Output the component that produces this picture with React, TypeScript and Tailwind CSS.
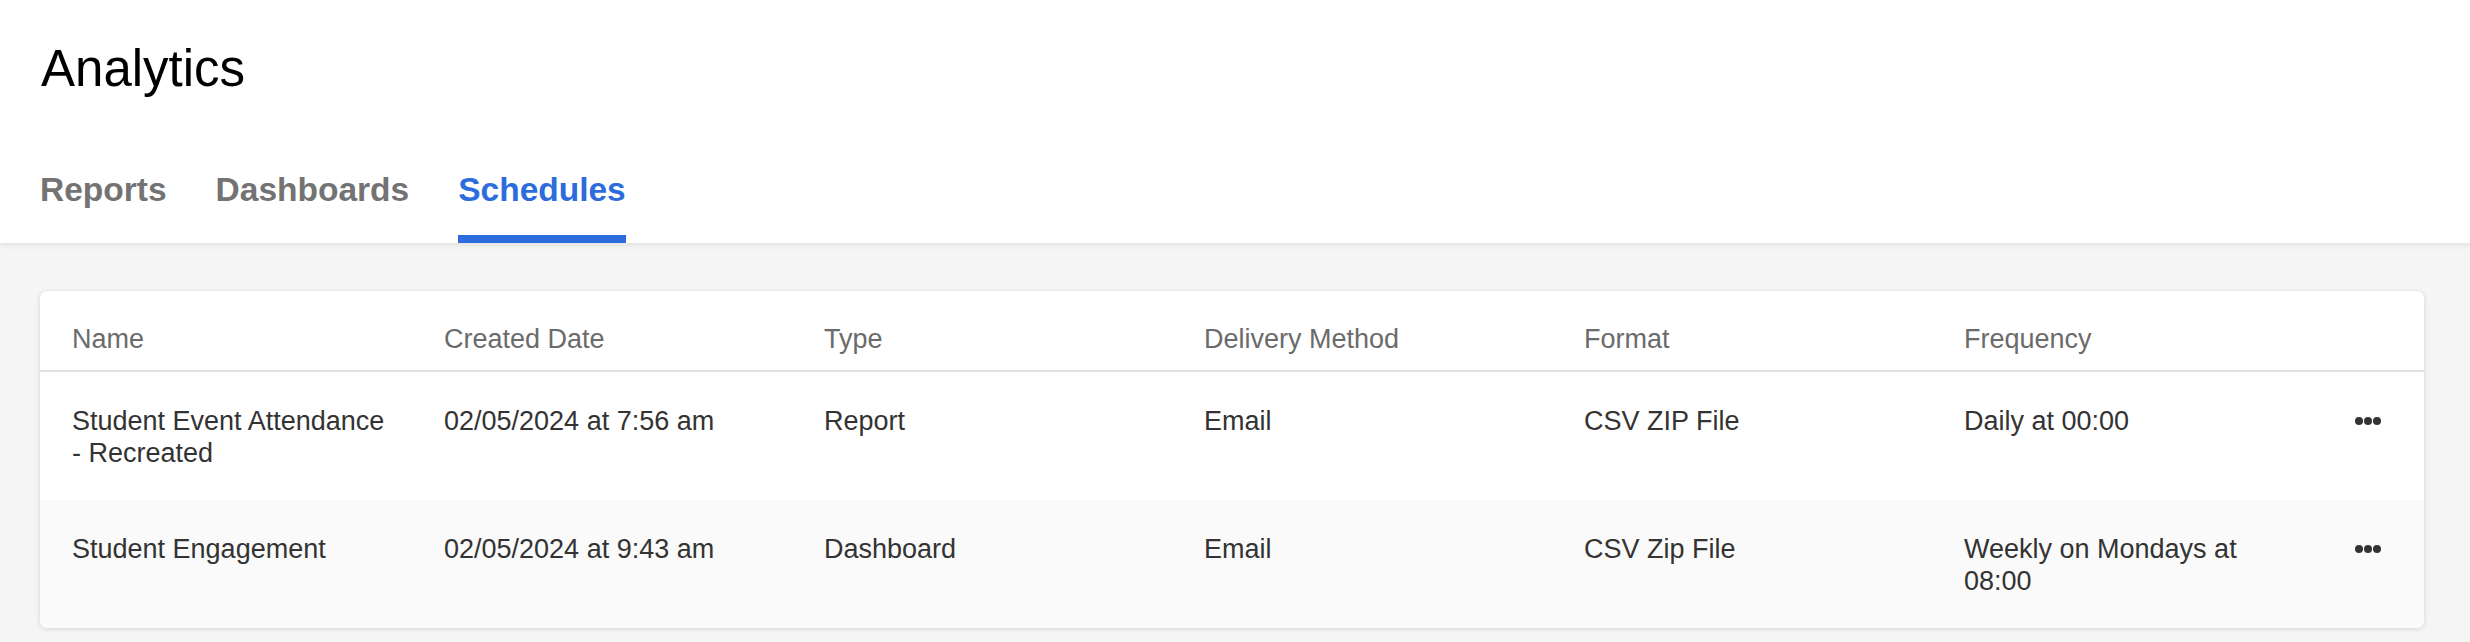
import React from 'react';

type Schedule = {
  name: string;
  created: string;
  type: string;
  delivery: string;
  format: string;
  frequency: string;
};

const schedules: Schedule[] = [
  {
    name: 'Student Event Attendance - Recreated',
    created: '02/05/2024 at 7:56 am',
    type: 'Report',
    delivery: 'Email',
    format: 'CSV ZIP File',
    frequency: 'Daily at 00:00',
  },
  {
    name: 'Student Engagement',
    created: '02/05/2024 at 9:43 am',
    type: 'Dashboard',
    delivery: 'Email',
    format: 'CSV Zip File',
    frequency: 'Weekly on Mondays at 08:00',
  },
];

const columns = ['Name', 'Created Date', 'Type', 'Delivery Method', 'Format', 'Frequency'];

const tabs = ['Reports', 'Dashboards', 'Schedules'];

const MoreDots = () => (
  <div className="flex h-[32px] items-center justify-center gap-[1px]">
    <span className="h-[8px] w-[8px] rounded-full bg-[#333333]" />
    <span className="h-[8px] w-[8px] rounded-full bg-[#333333]" />
    <span className="h-[8px] w-[8px] rounded-full bg-[#333333]" />
  </div>
);

export default function App() {
  const active = 'Schedules';

  return (
    <div className="min-h-[642px] bg-[#f5f5f5] font-['Liberation_Sans',Arial,sans-serif]">
      {/* page header */}
      <div className="relative z-10 bg-white pl-[40px] pt-[40px] shadow-[0_2px_6px_rgba(0,0,0,0.09)]">
        <h1 className="pl-[1px] text-[51px] leading-[58px] font-normal text-black">Analytics</h1>

        <div className="mt-[72px] flex gap-[49px]">
          {tabs.map(tab => (
            <div
              key={tab}
              className={`pb-[25px] text-[33.5px] leading-[40px] font-bold border-b-[8px] ${
                tab === active ? 'border-[#2d6cdc] text-[#2d6cdc]' : 'border-transparent text-[#737373]'
              }`}
            >
              {tab}
            </div>
          ))}
        </div>
      </div>

      {/* schedules table */}
      <div className="pl-[40px] pr-[46px] pt-[48px]">
        <div className="overflow-hidden rounded-[7px] bg-white shadow-[0_1px_5px_rgba(0,0,0,0.14)]">
          <table className="w-full table-fixed border-collapse text-left text-[27px] leading-[32px]">
            <colgroup>
              <col className="w-[372px]" />
              <col className="w-[380px]" />
              <col className="w-[380px]" />
              <col className="w-[380px]" />
              <col className="w-[380px]" />
              <col className="w-[380px]" />
              <col className="w-[112px]" />
            </colgroup>
            <thead>
              <tr className="border-b-2 border-[#e0e0e0]">
                {columns.map(col => (
                  <th key={col} className="pl-[32px] pr-[16px] pt-[32px] pb-[15px] font-normal text-[#6b6b6b]">
                    {col}
                  </th>
                ))}
                <th />
              </tr>
            </thead>
            <tbody>
              {schedules.map((s, i) => (
                <tr key={s.name} className={i % 2 === 1 ? 'bg-[#fafafa]' : 'bg-white'}>
                  <td className="pl-[32px] pr-[16px] pt-[33px] pb-[31px] align-top text-[#333333]">{s.name}</td>
                  <td className="pl-[32px] pr-[16px] pt-[33px] pb-[31px] align-top text-[#333333]">{s.created}</td>
                  <td className="pl-[32px] pr-[16px] pt-[33px] pb-[31px] align-top text-[#333333]">{s.type}</td>
                  <td className="pl-[32px] pr-[16px] pt-[33px] pb-[31px] align-top text-[#333333]">{s.delivery}</td>
                  <td className="pl-[32px] pr-[16px] pt-[33px] pb-[31px] align-top text-[#333333]">{s.format}</td>
                  <td className="pl-[32px] pr-[16px] pt-[33px] pb-[31px] align-top text-[#333333]">{s.frequency}</td>
                  <td className="pt-[33px] pb-[31px] align-top">
                    <MoreDots />
                  </td>
                </tr>
              ))}
            </tbody>
          </table>
        </div>
      </div>
    </div>
  );
}
